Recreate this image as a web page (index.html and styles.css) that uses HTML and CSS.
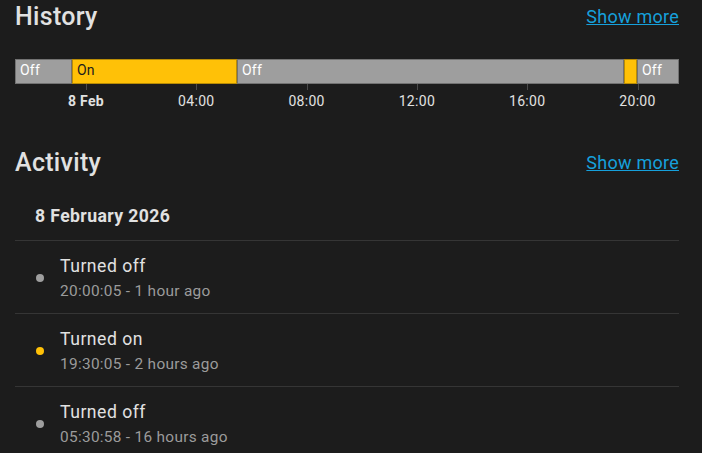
FILE: index.html
```html
<!DOCTYPE html>
<html lang="en">
<head>
<meta charset="utf-8">
<title>History</title>
<link rel="stylesheet" href="styles.css">
</head>
<body>
<section class="history">
  <div class="section-head">
    <h2 class="section-title">History</h2>
    <a class="show-more" href="#">Show more</a>
  </div>
  <div class="timeline">
    <div class="bar">
      <div class="seg off" style="width:57px">Off</div>
      <div class="seg on" style="width:165px">On</div>
      <div class="seg off" style="width:387px">Off</div>
      <div class="seg on" style="width:13px"></div>
      <div class="seg off" style="width:42px">Off</div>
    </div>
    <div class="axis">
      <div class="tick" style="--x:71px"><span class="tick-label strong">8 Feb</span></div>
      <div class="tick" style="--x:181.3px"><span class="tick-label">04:00</span></div>
      <div class="tick" style="--x:291.6px"><span class="tick-label">08:00</span></div>
      <div class="tick" style="--x:401.9px"><span class="tick-label">12:00</span></div>
      <div class="tick" style="--x:512.2px"><span class="tick-label">16:00</span></div>
      <div class="tick" style="--x:622.5px"><span class="tick-label">20:00</span></div>
    </div>
  </div>
</section>
<section class="activity">
  <div class="section-head">
    <h2 class="section-title">Activity</h2>
    <a class="show-more" href="#">Show more</a>
  </div>
  <div class="day">8 February 2026</div>
  <ul class="events">
    <li class="event">
      <span class="dot dot-off"></span>
      <div class="event-text">
        <div class="event-title">Turned off</div>
        <div class="event-sub">20:00:05 - 1 hour ago</div>
      </div>
    </li>
    <li class="event">
      <span class="dot dot-on"></span>
      <div class="event-text">
        <div class="event-title">Turned on</div>
        <div class="event-sub">19:30:05 - 2 hours ago</div>
      </div>
    </li>
    <li class="event">
      <span class="dot dot-off"></span>
      <div class="event-text">
        <div class="event-title">Turned off</div>
        <div class="event-sub">05:30:58 - 16 hours ago</div>
      </div>
    </li>
  </ul>
</section>
</body>
</html>
```

FILE: styles.css
```css
html, body {
  margin: 0;
  padding: 0;
  background: #1c1c1c;
}
body {
  font-family: Roboto, "Liberation Sans", sans-serif;
  color: #e1e1e1;
  padding: 0 23px 0 15px;
  overflow: hidden;
}
.section-head {
  display: flex;
  justify-content: space-between;
  align-items: flex-start;
}
.section-title {
  margin: 0;
  font-size: 25px;
  font-weight: 500;
  line-height: 33px;
  letter-spacing: 0.3px;
  color: #e1e1e1;
}
.show-more {
  margin-top: 5px;
  font-size: 18px;
  line-height: 24px;
  letter-spacing: 0.25px;
  color: #16a0db;
  text-decoration: underline;
}
.timeline {
  margin-top: 26px;
}
.bar {
  display: flex;
  height: 25px;
}
.seg {
  box-sizing: border-box;
  height: 25px;
  padding-left: 5px;
  font-size: 14px;
  line-height: 23px;
  letter-spacing: 0.2px;
  overflow: hidden;
  white-space: nowrap;
  box-shadow: inset 0 0 0 1px rgba(0, 0, 0, 0.28);
}
.seg.off {
  background: #9e9e9e;
  color: #ffffff;
}
.seg.on {
  background: #ffc107;
  color: #1c1c1c;
}
.axis {
  position: relative;
  height: 30px;
}
.tick {
  position: absolute;
  left: var(--x);
  top: 0;
  width: 1px;
  height: 6px;
  background: #4a4a4a;
}
.tick-label {
  position: absolute;
  top: 9px;
  left: 0;
  transform: translateX(-50%);
  font-size: 14px;
  line-height: 16px;
  letter-spacing: 0.3px;
  color: #e1e1e1;
  white-space: nowrap;
}
.tick-label.strong {
  font-weight: 700;
}
.activity {
  margin-top: 32px;
}
.day {
  padding: 25px 20px 12px;
  font-size: 17.6px;
  font-weight: 700;
  line-height: 24px;
  letter-spacing: 0.4px;
  border-bottom: 1px solid #353535;
}
.events {
  list-style: none;
  margin: 0;
  padding: 0;
}
.event {
  display: flex;
  align-items: center;
  gap: 16px;
  padding: 13px 0 12px 21px;
  border-bottom: 1px solid #353535;
}
.dot {
  width: 8px;
  height: 8px;
  border-radius: 50%;
  flex: none;
}
.dot-off {
  background: #9e9e9e;
}
.dot-on {
  background: #ffc107;
}
.event-title {
  font-size: 17.6px;
  line-height: 24px;
  letter-spacing: 0.5px;
  color: #e1e1e1;
}
.event-sub {
  margin-top: 3px;
  font-size: 15.4px;
  line-height: 20px;
  letter-spacing: 0.3px;
  color: #9b9b9b;
}
```
